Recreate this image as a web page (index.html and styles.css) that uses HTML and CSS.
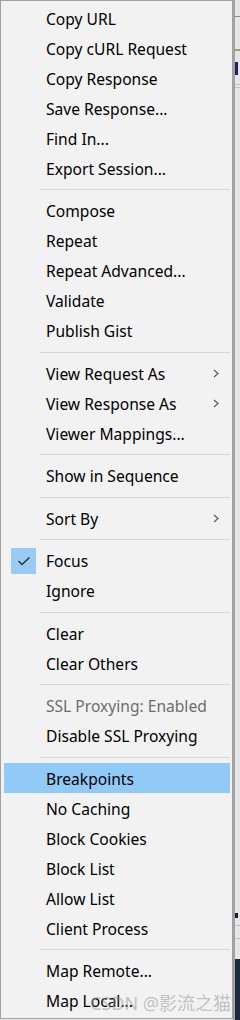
FILE: index.html
```html
<!DOCTYPE html>
<html lang="en">
<head>
    <meta charset="UTF-8">
    <title>Context Menu</title>
    <link rel="stylesheet" href="styles.css">
</head>
<body>
    <div class="screen">
        <div class="menu">
            <div class="item">Copy URL</div>
            <div class="item">Copy cURL Request</div>
            <div class="item">Copy Response</div>
            <div class="item">Save Response...</div>
            <div class="item">Find In...</div>
            <div class="item">Export Session...</div>
            <div class="sep"></div>
            <div class="item">Compose</div>
            <div class="item">Repeat</div>
            <div class="item">Repeat Advanced...</div>
            <div class="item">Validate</div>
            <div class="item">Publish Gist</div>
            <div class="sep"></div>
            <div class="item">View Request As
                <svg class="arrow" width="6" height="9" viewBox="0 0 6 9"><polyline points="1,1 5,4.5 1,8" fill="none" stroke="#555" stroke-width="1.1"/></svg>
            </div>
            <div class="item">View Response As
                <svg class="arrow" width="6" height="9" viewBox="0 0 6 9"><polyline points="1,1 5,4.5 1,8" fill="none" stroke="#555" stroke-width="1.1"/></svg>
            </div>
            <div class="item">Viewer Mappings...</div>
            <div class="sep"></div>
            <div class="item">Show in Sequence</div>
            <div class="sep"></div>
            <div class="item">Sort By
                <svg class="arrow" width="6" height="9" viewBox="0 0 6 9"><polyline points="1,1 5,4.5 1,8" fill="none" stroke="#555" stroke-width="1.1"/></svg>
            </div>
            <div class="sep"></div>
            <div class="item checked">
                <span class="check">
                    <svg width="14" height="10" viewBox="0 0 14 10"><polyline points="1.5,5 5,8.5 12.5,1.5" fill="none" stroke="#333" stroke-width="1.6"/></svg>
                </span>
                Focus
            </div>
            <div class="item">Ignore</div>
            <div class="sep"></div>
            <div class="item">Clear</div>
            <div class="item">Clear Others</div>
            <div class="sep"></div>
            <div class="item disabled">SSL Proxying: Enabled</div>
            <div class="item">Disable SSL Proxying</div>
            <div class="sep"></div>
            <div class="item active">Breakpoints</div>
            <div class="item">No Caching</div>
            <div class="item">Block Cookies</div>
            <div class="item">Block List</div>
            <div class="item">Allow List</div>
            <div class="item">Client Process</div>
            <div class="sep"></div>
            <div class="item">Map Remote...</div>
            <div class="item">Map Local...</div>
        </div>
        <div class="behind">
            <div class="strip-head"></div>
            <div class="strip-tab"></div>
            <div class="strip-text top"></div>
            <div class="strip-line"></div>
            <div class="strip-line near"></div>
            <div class="strip-fill"></div>
            <div class="strip-text bottom"></div>
            <div class="strip-line mid"></div>
            <div class="strip-line far"></div>
            <div class="strip-dark"></div>
        </div>
        <div class="watermark">CSDN @影流之猫</div>
    </div>
</body>
</html>
```

FILE: styles.css
```css
body {
    margin: 0;
    font-family: "Noto Sans", "Noto Sans CJK SC", sans-serif;
    background: #e9e9e9;
}

.screen {
    position: relative;
    display: flex;
    width: 240px;
    height: 1020px;
    overflow: hidden;
}

.menu {
    width: 231px;
    height: 1015px;
    padding-top: 2px;
    border: 1px solid #a0a0a0;
    background: #f2f2f2;
    flex-shrink: 0;
}

.menu .item {
    position: relative;
    display: flex;
    align-items: center;
    height: 30px;
    padding-top: 1px;
    box-sizing: border-box;
    margin: 0 2px 0 3px;
    padding-left: 42px;
    font-size: 15.6px;
    color: #000;
    white-space: nowrap;
}

.menu .item.disabled {
    color: #6d6d6d;
}

.menu .item.active {
    background: #91c9f7;
}

.menu .arrow {
    position: absolute;
    right: 11px;
    top: 11px;
}

.menu .check {
    position: absolute;
    left: 7px;
    top: 2px;
    width: 25px;
    height: 26px;
    display: flex;
    align-items: center;
    justify-content: center;
    background: #99cbf6;
}

.menu .sep {
    height: 1px;
    margin: 6px 2px 5.5px 39px;
    background: #d5d5d5;
}

.behind {
    flex: 1;
    display: flex;
    flex-direction: column;
    border-left: 2px solid #a3a3a3;
    background: #e6e6e6;
}

.behind .strip-head {
    height: 16px;
    border-bottom: 1px solid #8a8a8a;
}

.behind .strip-tab {
    height: 32px;
    border-bottom: 2px solid #9a9a9a;
}

.behind .strip-text {
    width: 3px;
    background: #2b1a6e;
}

.behind .strip-text.top {
    height: 13px;
    margin: 11px 0 9px;
}

.behind .strip-line {
    height: 1px;
    background: #c4c4c4;
}

.behind .strip-line.near {
    margin-top: 2px;
}

.behind .strip-fill {
    height: 825px;
}

.behind .strip-text.bottom {
    height: 5px;
    background: #1e1a40;
}

.behind .strip-line.mid {
    margin-top: 7px;
}

.behind .strip-line.far {
    margin-top: 12px;
}

.behind .strip-dark {
    flex: 1;
    margin-top: 20px;
    background: #1c2b3a;
}

.watermark {
    position: absolute;
    left: 90px;
    top: 989px;
    font-size: 18px;
    color: rgba(150, 150, 150, 0.55);
    white-space: nowrap;
}
```
